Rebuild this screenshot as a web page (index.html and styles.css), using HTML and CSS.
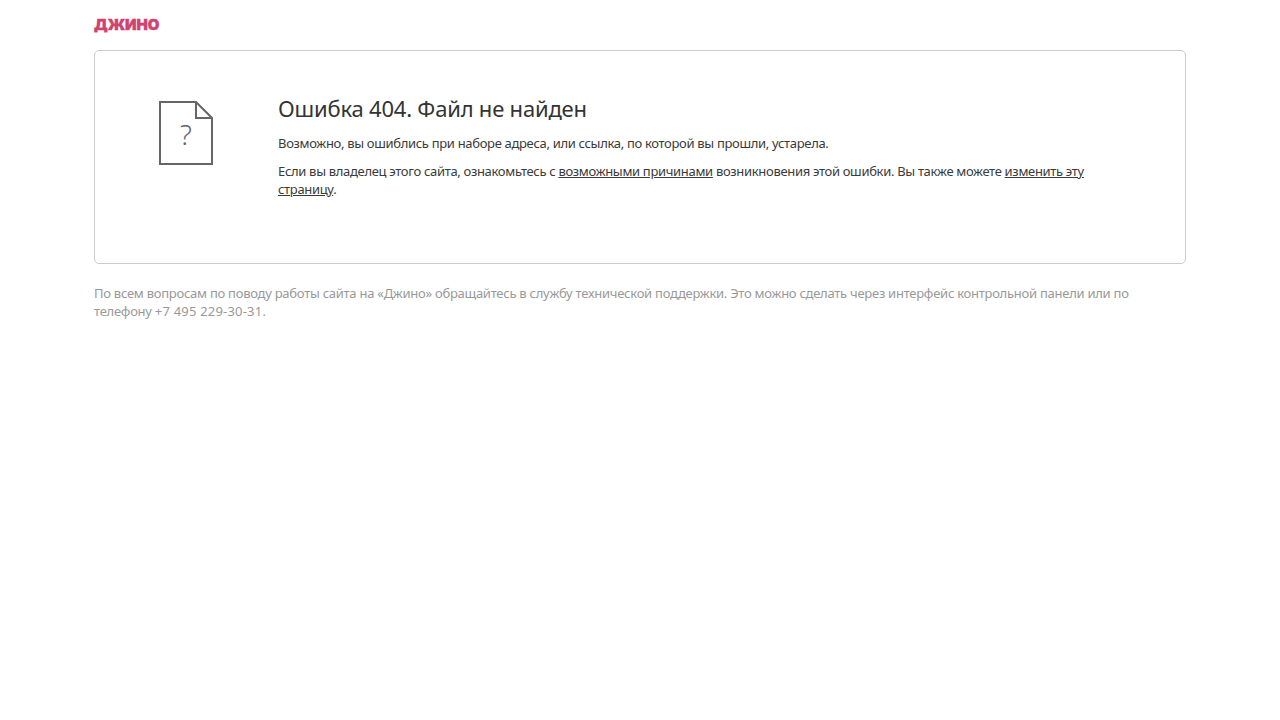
FILE: index.html
```html
<!DOCTYPE html>
<html lang="ru">
<head>
<meta charset="utf-8">
<title>Ошибка 404</title>
<link rel="stylesheet" href="styles.css">
</head>
<body>
<div class="page">
  <header class="header"><span class="logo">ДЖИНО</span></header>
  <main class="card">
    <div class="icon-col">
      <svg class="file-icon" width="54" height="64" viewBox="0 0 54 64" aria-hidden="true">
        <path d="M1 1H37L53 17V63H1Z M37 1V17H53" fill="none" stroke="#666" stroke-width="2"/>
      </svg>
      <span class="question">?</span>
    </div>
    <div class="content">
      <h1 class="title">Ошибка 404. Файл не найден</h1>
      <p class="text">Возможно, вы ошиблись при наборе адреса, или ссылка, по которой вы прошли, устарела.</p>
      <p class="text">Если вы владелец этого сайта, ознакомьтесь с <a class="link" href="#">возможными причинами</a> возникновения этой ошибки. Вы также можете <a class="link" href="#">изменить эту страницу</a>.</p>
    </div>
  </main>
  <p class="note">По всем вопросам по поводу работы сайта на «Джино» обращайтесь в службу технической поддержки. Это можно сделать через интерфейс контрольной панели или по телефону <span class="phone">+7 495 229-30-31.</span></p>
</div>
</body>
</html>
```
FILE: styles.css
```css
html, body { margin: 0; padding: 0; background: #fff; }
body { font-family: "Noto Sans", "Open Sans", sans-serif; font-size: 13px; line-height: 18px; color: #3a3a3a; }
.page { width: 1092px; margin: 0 auto; }
.header { height: 50px; display: flex; align-items: flex-start; padding-top: 16px; box-sizing: border-box; }
.logo { font-family: Inter, sans-serif; font-weight: 900; font-size: 15px; line-height: 18px; color: #d0426f; -webkit-text-stroke: 0.4px #d0426f; }
.card { box-sizing: border-box; height: 214px; border: 1px solid #ccc; border-radius: 5px; display: flex; padding: 41px 64px 0 64px; }
.icon-col { position: relative; width: 54px; height: 64px; margin-top: 9px; margin-right: 65px; flex: none; }
.file-icon { display: block; }
.question { position: absolute; left: 0; right: 0; top: 18px; text-align: center; font-size: 28px; font-weight: 300; line-height: 30px; color: #666; }
.content { flex: 1; min-width: 0; }
.title { margin: 2px 0 0; padding-bottom: 2px; font-size: 22px; font-weight: 400; line-height: 28px; letter-spacing: -0.2px; color: #333; }
.text { margin: 10px 0 0; letter-spacing: -0.32px; }
.link { color: inherit; text-decoration: underline; }
.note { margin: 20px 0 0; color: #999; letter-spacing: -0.26px; }
.phone { letter-spacing: 0.2px; }
```
